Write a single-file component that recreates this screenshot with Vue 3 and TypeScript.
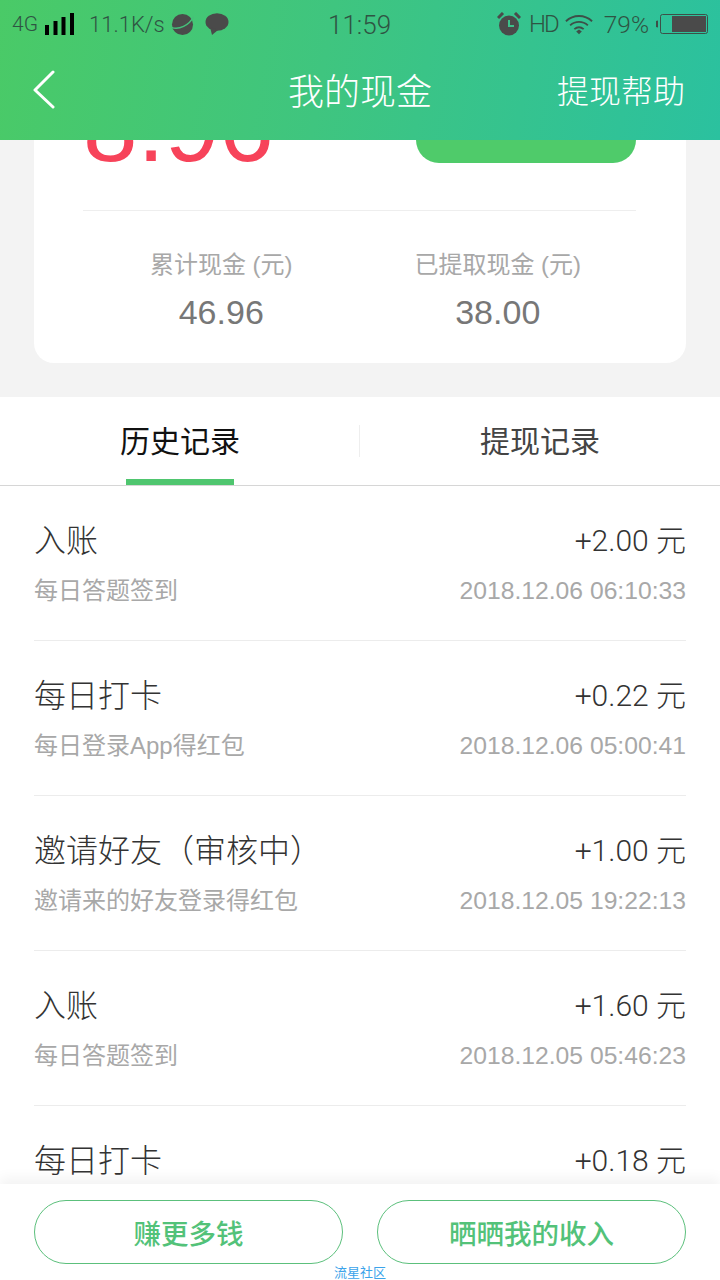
<script setup lang="ts">
interface Rec {
  title: string
  sub?: string
  amount: string
  time?: string
}

// the last row is cut off by the footer, only its first line shows
const records: Rec[] = [
  { title: '入账', sub: '每日答题签到', amount: '+2.00 元', time: '2018.12.06 06:10:33' },
  { title: '每日打卡', sub: '每日登录App得红包', amount: '+0.22 元', time: '2018.12.06 05:00:41' },
  { title: '邀请好友（审核中）', sub: '邀请来的好友登录得红包', amount: '+1.00 元', time: '2018.12.05 19:22:13' },
  { title: '入账', sub: '每日答题签到', amount: '+1.60 元', time: '2018.12.05 05:46:23' },
  { title: '每日打卡', amount: '+0.18 元' }
]
</script>

<template>
  <div class="page">
    <header class="top">
      <div class="status">
        <div class="status-left">
          <span class="net">4G</span>
          <svg class="signal" width="29" height="22" viewBox="0 0 29 22">
            <rect x="0" y="12" width="4" height="10" />
            <rect x="8.500" y="8" width="4" height="14" />
            <rect x="16.500" y="4" width="4" height="18" />
            <rect x="25" y="0" width="4" height="22" />
          </svg>
          <span class="speed">11.1K/s</span>
          <svg class="planet" width="23" height="23" viewBox="0 0 24 24">
            <circle cx="12" cy="12" r="11" fill="#4a4a4a" />
            <path d="M0.500 15C8 18 19 13 23.500 4" fill="none" stroke="#45c07a" stroke-width="1.6" />
          </svg>
          <svg class="chat" width="24" height="22" viewBox="0 0 24 22">
            <ellipse cx="12" cy="9" rx="11.500" ry="8.800" fill="#4a4a4a" />
            <path d="M5 14l2 8 6-5z" fill="#4a4a4a" />
          </svg>
        </div>
        <span class="clock">11:59</span>
        <div class="status-right">
          <svg width="24" height="24" viewBox="0 0 24 24">
            <circle cx="12" cy="13.500" r="10" fill="#4a4a4a" />
            <path d="M12 8v6h5" fill="none" stroke="#3cc08a" stroke-width="2" />
            <path d="M1 6l5-5M23 6l-5-5" stroke="#4a4a4a" stroke-width="3" />
          </svg>
          <span class="hd">HD</span>
          <svg width="28" height="22" viewBox="0 0 30 22">
            <g fill="none" stroke="#3d4f48" stroke-width="2">
              <path d="M1 8c8-7.500 20-7.500 28 0" />
              <path d="M5.500 12.500c5.500-5 13.500-5 19 0" />
              <path d="M10 16.500c3-2.500 7-2.500 10 0" />
            </g>
            <path d="M12 19l3-2 3 2-3 3z" fill="#3d4f48" />
          </svg>
          <span class="pct">79%</span>
          <svg class="battery" width="52" height="20" viewBox="0 0 52 20">
            <path d="M2 6.500a3 3 0 0 0 0 7z" fill="#3d4f48" />
            <rect x="4.500" y="0.500" width="47" height="19" rx="2" fill="none" stroke="#3d4f48" />
            <rect x="16" y="2" width="34" height="16" fill="#4a4a4a" />
          </svg>
        </div>
      </div>
      <div class="nav">
        <svg class="back" width="24" height="40" viewBox="0 0 24 40">
          <path d="M21 2L3 20l18 17" fill="none" stroke="#fff" stroke-width="3" stroke-linecap="round" stroke-linejoin="round" />
        </svg>
        <h1>我的现金</h1>
        <span class="help">提现帮助</span>
      </div>
    </header>

    <section class="summary">
      <div class="card">
        <div class="balance-row">
          <span class="balance">8.96</span>
          <span class="withdraw"></span>
        </div>
        <div class="totals">
          <div class="total">
            <span class="total-label">累计现金 (元)</span>
            <span class="total-value">46.96</span>
          </div>
          <div class="total">
            <span class="total-label">已提取现金 (元)</span>
            <span class="total-value">38.00</span>
          </div>
        </div>
      </div>
    </section>

    <div class="tabs">
      <div class="tab active">历史记录<i class="tab-bar"></i></div>
      <i class="tab-sep"></i>
      <div class="tab">提现记录</div>
    </div>

    <ul class="list">
      <li v-for="(r, i) in records" :key="i" class="row">
        <div class="line">
          <span class="title">{{ r.title }}</span>
          <span class="amount">{{ r.amount }}</span>
        </div>
        <div v-if="r.sub" class="line">
          <span class="sub">{{ r.sub }}</span>
          <span class="time">{{ r.time }}</span>
        </div>
      </li>
    </ul>

    <footer class="foot">
      <button class="btn">赚更多钱</button>
      <button class="btn">晒晒我的收入</button>
      <span class="mark">流星社区</span>
    </footer>
  </div>
</template>

<style>
html, body {
  margin: 0;
  background: #fff;
}
</style>

<style scoped>
.page {
  width: 720px;
  height: 1280px;
  display: flex;
  flex-direction: column;
  overflow: hidden;
  position: relative;
  background: #fff;
  font-family: "Liberation Sans", "Noto Sans CJK SC", sans-serif;
}

.top {
  height: 140px;
  flex: none;
  position: relative;
  z-index: 2;
  background: linear-gradient(100deg, #4aca67 0%, #3fc57f 45%, #2bc19f 100%);
}

.status {
  height: 48px;
  padding: 0 12px;
  display: flex;
  align-items: center;
  position: relative;
  justify-content: space-between;
  color: #2f5443;
  font-family: Roboto, "Noto Sans CJK SC", sans-serif;
}

.status-left, .status-right {
  display: flex;
  align-items: center;
}

.net {
  font-size: 21px;
  font-weight: 300;
  margin-right: 7px;
}

.speed {
  font-size: 22px;
  font-weight: 300;
  margin: 0 6px 0 15px;
}

.chat {
  margin-left: 11px;
}

.clock {
  position: absolute;
  left: 328px;
  top: 10px;
  font-size: 26px;
  font-weight: 300;
}

.hd {
  font-size: 24px;
  font-weight: 300;
  margin: 0 7px 0 8px;
  letter-spacing: -2px;
}

.pct {
  font-size: 24.500px;
  font-weight: 300;
  margin: 0 7px 0 11px;
}

.nav {
  height: 82px;
  display: flex;
  align-items: center;
  position: relative;
  padding-left: 32px;
  color: #fff;
}

.back {
  flex: none;
  margin-top: 2px;
}

.nav h1 {
  position: absolute;
  left: 0;
  right: 0;
  margin: 0;
  text-align: center;
  font-size: 36px;
  font-weight: 300;
}

.help {
  margin-left: auto;
  margin-right: 35px;
  font-size: 32px;
  font-weight: 300;
}

.summary {
  height: 257px;
  flex: none;
  padding: 0 34px;
  background: #f3f3f3;
  overflow: hidden;
}

.card {
  height: 223px;
  background: #fff;
  border-radius: 0 0 20px 20px;
  padding: 0 50px 0 49px;
  display: flex;
  flex-direction: column;
  overflow: hidden;
}

.balance-row {
  height: 70px;
  flex: none;
  display: flex;
  justify-content: space-between;
  border-bottom: 1px solid #eeeeee;
  overflow: hidden;
}

.balance {
  margin-top: -68px;
  font-size: 98px;
  line-height: 110px;
  color: #f7435a;
}

.withdraw {
  width: 220px;
  height: 23px;
  background: #4fcb6a;
  border-radius: 0 0 36px 36px;
}

.totals {
  display: flex;
  padding-top: 38px;
}

.total {
  width: 50%;
  display: flex;
  flex-direction: column;
  align-items: center;
}

.total-label {
  font-size: 24px;
  line-height: 32px;
  color: #a8a8a8;
}

.total-value {
  margin-top: 11px;
  font-size: 34px;
  line-height: 40px;
  color: #777;
}

.tabs {
  height: 89px;
  flex: none;
  display: flex;
  align-items: center;
  border-bottom: 1px solid #d6d6d6;
  box-sizing: border-box;
}

.tab {
  position: relative;
  flex: 1;
  height: 88px;
  line-height: 90px;
  text-align: center;
  font-size: 30px;
  color: #444;
}

.tab.active {
  color: #111;
}

.tab-bar {
  position: absolute;
  left: 126px;
  bottom: 0;
  width: 108px;
  height: 6px;
  background: #4fc66f;
}

.tab-sep {
  width: 1px;
  height: 32px;
  margin-left: -1px;
  background: #eee;
}

.list {
  flex: 1;
  min-height: 0;
  margin: 0;
  padding: 0;
  list-style: none;
  overflow: hidden;
}

.row {
  height: 122px;
  margin: 0 34px;
  border-bottom: 1px solid #ececec;
  padding-top: 32px;
}

.line {
  display: flex;
  justify-content: space-between;
  align-items: center;
}

.title {
  font-size: 32px;
  line-height: 46px;
  color: #333;
  font-weight: 300;
}

.amount {
  font-family: Roboto, "Noto Sans CJK SC", sans-serif;
  font-size: 30px;
  line-height: 46px;
  color: #333;
  font-weight: 300;
}

.sub, .time {
  line-height: 34px;
  margin-top: 10px;
  color: #a8a8a8;
}

.sub {
  font-size: 24px;
}

.time {
  font-size: 24.700px;
}

.foot {
  height: 96px;
  flex: none;
  box-sizing: border-box;
  padding: 16px 34px 0;
  display: flex;
  justify-content: space-between;
  align-items: flex-start;
  background: #fff;
  position: relative;
  box-shadow: 0 -6px 12px rgba(0, 0, 0, 0.05);
}

.btn {
  width: 309px;
  height: 64px;
  padding: 0;
  background: #fff;
  border: 1px solid #5cc07c;
  border-radius: 32px;
  color: #53c279;
  font-family: inherit;
  font-size: 27.500px;
  font-weight: 500;
}

.mark {
  position: absolute;
  left: 334px;
  bottom: -1px;
  font-size: 13px;
  line-height: 16px;
  color: #3ba3ea;
}
</style>
